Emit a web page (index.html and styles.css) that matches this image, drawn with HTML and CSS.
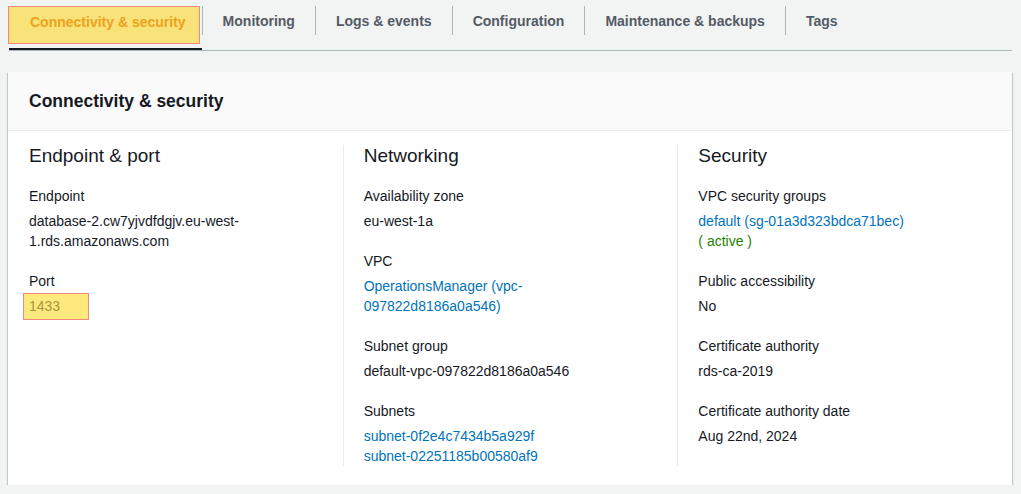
FILE: index.html
```html
<!DOCTYPE html>
<html lang="en">
<head>
<meta charset="utf-8">
<title>Connectivity &amp; security</title>
<link rel="stylesheet" href="styles.css">
</head>
<body>
  <nav class="tabs">
    <div class="tab active"><span class="tab-label">Connectivity &amp; security</span></div>
    <div class="tab"><span class="tab-label">Monitoring</span></div>
    <div class="tab"><span class="tab-label">Logs &amp; events</span></div>
    <div class="tab"><span class="tab-label">Configuration</span></div>
    <div class="tab"><span class="tab-label">Maintenance &amp; backups</span></div>
    <div class="tab"><span class="tab-label">Tags</span></div>
  </nav>

  <section class="panel">
    <header class="panel-header">
      <h2 class="panel-title">Connectivity &amp; security</h2>
    </header>
    <div class="panel-body">
      <div class="column">
        <h3 class="col-title">Endpoint &amp; port</h3>
        <div class="item">
          <div class="label">Endpoint</div>
          <div class="value narrow">database-2.cw7yjvdfdgjv.eu-west-1.rds.amazonaws.com</div>
        </div>
        <div class="item">
          <div class="label">Port</div>
          <div class="value highlight">1433</div>
        </div>
      </div>

      <div class="column">
        <h3 class="col-title">Networking</h3>
        <div class="item">
          <div class="label">Availability zone</div>
          <div class="value">eu-west-1a</div>
        </div>
        <div class="item">
          <div class="label">VPC</div>
          <div class="value narrow"><a class="link" href="#">OperationsManager (vpc-097822d8186a0a546)</a></div>
        </div>
        <div class="item">
          <div class="label">Subnet group</div>
          <div class="value">default-vpc-097822d8186a0a546</div>
        </div>
        <div class="item">
          <div class="label">Subnets</div>
          <div class="value">
            <a class="link block" href="#">subnet-0f2e4c7434b5a929f</a>
            <a class="link block" href="#">subnet-02251185b00580af9</a>
          </div>
        </div>
      </div>

      <div class="column">
        <h3 class="col-title">Security</h3>
        <div class="item">
          <div class="label">VPC security groups</div>
          <div class="value">
            <a class="link block" href="#">default (sg-01a3d323bdca71bec)</a>
            <span class="status">( active )</span>
          </div>
        </div>
        <div class="item">
          <div class="label">Public accessibility</div>
          <div class="value">No</div>
        </div>
        <div class="item">
          <div class="label">Certificate authority</div>
          <div class="value">rds-ca-2019</div>
        </div>
        <div class="item">
          <div class="label">Certificate authority date</div>
          <div class="value">Aug 22nd, 2024</div>
        </div>
      </div>
    </div>
  </section>
</body>
</html>
```

FILE: styles.css
```css
* { box-sizing: border-box; }

body {
  margin: 0;
  background: #f2f3f3;
  font-family: "Liberation Sans", Arial, sans-serif;
  font-size: 14px;
  line-height: 20px;
  color: #16191f;
}

.tabs {
  display: flex;
  margin: 0 9px 0 9px;
  padding-top: 6px;
  border-bottom: 1px solid #aab7b8;
}

.tab {
  height: 44px;
  display: flex;
  align-items: flex-start;
  border-bottom: 2px solid transparent;
}

.tab-label {
  display: block;
  height: 29px;
  line-height: 30px;
  padding: 0 20px 0 21px;
  font-weight: bold;
  color: #545b64;
  white-space: nowrap;
}

.tab + .tab .tab-label {
  border-left: 1px solid #aab7b8;
  padding-left: 20px;
}

.tab.active {
  border-bottom-color: #16191f;
}

.tab.active .tab-label {
  height: 38px;
  margin-left: -1px;
  padding: 0 13px 0 21px;
  margin-right: 2px;
  background: #f8e37b;
  border: 1.5px solid #f08a80;
  color: #eea21c;
}

.panel {
  margin: 21px 9px 0 8px;
  background: #ffffff;
  box-shadow: 0 1px 1px 0 rgba(0, 28, 36, 0.3), 1px 1px 1px 0 rgba(0, 28, 36, 0.15), -1px 1px 1px 0 rgba(0, 28, 36, 0.15);
}

.panel-header {
  height: 59px;
  padding: 0 21px;
  display: flex;
  align-items: center;
  background: #fafafa;
  border-bottom: 1px solid #eaeded;
}

.panel-title {
  margin: 0;
  font-size: 17.5px;
  line-height: 22px;
  font-weight: bold;
  color: #16191f;
}

.panel-body {
  display: grid;
  grid-template-columns: 1fr 1fr 1fr;
  padding: 14px 0 19px 0;
}

.column {
  padding: 0 20px 0 21px;
}

.column + .column {
  border-left: 1px solid #eaeded;
  padding-left: 20px;
}

.col-title {
  margin: 0 0 19px 0;
  font-size: 19px;
  line-height: 22px;
  font-weight: normal;
  color: #16191f;
}

.item + .item {
  margin-top: 20px;
}

.label {
  color: #16191f;
}

.value {
  margin-top: 5px;
  color: #16191f;
}

.narrow {
  max-width: 240px;
}

.column:nth-child(2) .narrow {
  max-width: 200px;
}

.link {
  color: #0073bb;
  text-decoration: none;
}

.link.block {
  display: block;
}

.status {
  color: #1d8102;
}

.highlight {
  width: fit-content;
  margin: 2px 0 0 -6px;
  padding: 2px 28px 3px 5px;
  background: #fee97f;
  border: 1px solid #f08a80;
  color: #a8953a;
}
```
